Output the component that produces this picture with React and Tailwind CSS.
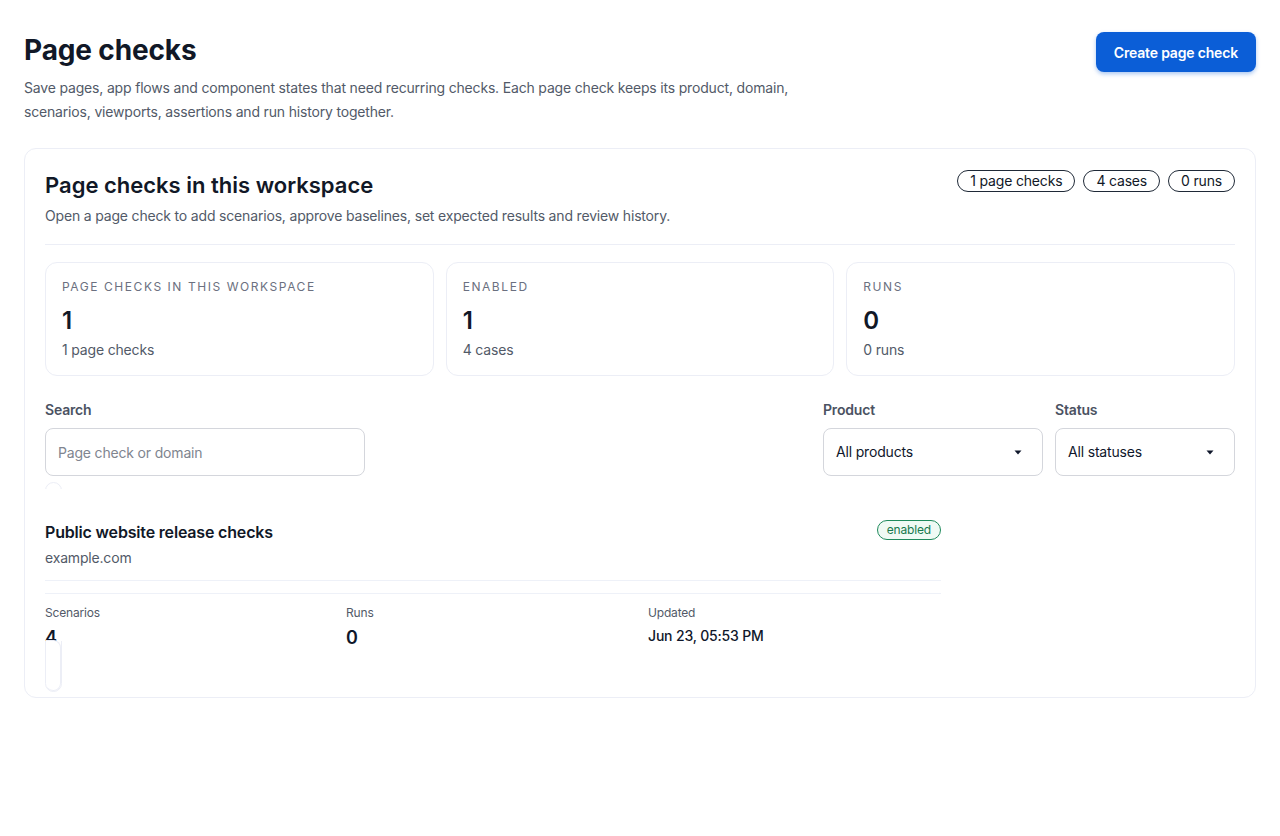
import { useState } from "react";

const stats = [
  { label: "Page checks in this workspace", value: "1", sub: "1 page checks" },
  { label: "Enabled", value: "1", sub: "4 cases" },
  { label: "Runs", value: "0", sub: "0 runs" },
];

const Caret = () => (
  <svg width="8" height="5" viewBox="0 0 8 5" className="text-slate-900">
    <path d="M0.5 0.5h7L4 4.5z" fill="currentColor" />
  </svg>
);

const SelectBox = ({ label, value, width }) => (
  <div className={width}>
    <div className="text-sm leading-5 font-semibold text-[#4b5262]">{label}</div>
    <button
      type="button"
      className="mt-2 flex h-12 w-full items-center justify-between rounded-lg border border-[#d4d6dc] bg-white pl-3 pr-5 text-sm text-slate-900"
    >
      <span>{value}</span>
      <Caret />
    </button>
  </div>
);

export default function App() {
  const [query, setQuery] = useState("");

  return (
    <div
      className="min-h-screen bg-white px-6 pt-8 tracking-[-0.011em] text-slate-900"
      style={{ fontFamily: "Inter, 'Liberation Sans', sans-serif" }}
    >
      {/* Encabezado */}
      <div className="flex items-start justify-between">
        <div>
          <h1 className="text-[28px] leading-9 font-bold tracking-[-0.005em] text-[#111827]">
            Page checks
          </h1>
          <p className="mt-2 max-w-[800px] text-sm leading-6 text-[#525a68]">
            Save pages, app flows and component states that need recurring checks. Each page check
            keeps its product, domain, scenarios, viewports, assertions and run history together.
          </p>
        </div>
        <button
          type="button"
          className="h-10 rounded-lg bg-[#0b5ed7] px-[18px] pt-px text-sm font-semibold text-white shadow-[0_2px_4px_rgba(11,94,215,0.35)]"
        >
          Create page check
        </button>
      </div>

      {/* Tarjeta principal */}
      <div className="mt-6 rounded-xl border border-[#eceef6] px-5 pt-5 pb-[5px]">
        <div className="flex items-start justify-between">
          <div>
            <h2 className="text-[22px] leading-8 font-semibold tracking-normal text-[#111827]">
              Page checks in this workspace
            </h2>
            <p className="mt-[5px] text-sm leading-5 text-[#525a68]">
              Open a page check to add scenarios, approve baselines, set expected results and review
              history.
            </p>
          </div>
          <div className="mt-px flex gap-2">
            {["1 page checks", "4 cases", "0 runs"].map((p) => (
              <span
                key={p}
                className="flex h-[22px] items-center rounded-full border border-[#1f2937] px-3 text-sm text-[#111827]"
              >
                {p}
              </span>
            ))}
          </div>
        </div>

        <div className="mt-[18px] h-px bg-[#eceef6]" />

        {/* Estadísticas */}
        <div className="mt-[17px] grid grid-cols-3 gap-3">
          {stats.map((s) => (
            <div key={s.label} className="rounded-xl border border-[#eceef6] px-4 pt-4 pb-[15px]">
              <div className="text-xs leading-4 uppercase tracking-[0.13em] text-[#6b7080]">
                {s.label}
              </div>
              <div className="mt-[10px] text-2xl leading-8 font-semibold text-[#111827]">
                {s.value}
              </div>
              <div className="mt-[3px] text-sm leading-5 text-[#525a68]">{s.sub}</div>
            </div>
          ))}
        </div>

        {/* Filtros */}
        <div className="mt-6 flex items-start">
          <div className="w-[320px]">
            <div className="text-sm leading-5 font-semibold text-[#4b5262]">Search</div>
            <input
              value={query}
              onChange={(e) => setQuery(e.target.value)}
              placeholder="Page check or domain"
              className="mt-2 h-12 w-full rounded-lg border border-[#d4d6dc] px-3 text-sm text-slate-900 placeholder:text-[#80858f] outline-none"
            />
          </div>
          <div className="ml-auto flex gap-3">
            <SelectBox label="Product" value="All products" width="w-[220px]" />
            <SelectBox label="Status" value="All statuses" width="w-[180px]" />
          </div>
        </div>

        {/* Lista de page checks */}
        <div className="mt-[6px] h-[210px] w-[17px] rounded-xl border border-[#eceef6]">
          <div className="-ml-px mt-[6px] h-[152px] w-[896px] bg-white pt-[31px]">
            <div className="flex items-start justify-between">
              <div>
                <div className="text-base leading-6 font-semibold text-[#111827]">
                  Public website release checks
                </div>
                <div className="mt-1 text-sm leading-5 text-[#525a68]">example.com</div>
              </div>
              <span className="flex h-5 items-center rounded-full border border-[#1f8a5c] bg-[#effaf4] px-[9px] text-xs text-[#17794d]">
                enabled
              </span>
            </div>
            <div className="mt-3 h-px bg-[#eef1f8]" />
            <div className="mt-3 h-px bg-[#eef1f8]" />
            <div className="mt-[11px] grid grid-cols-[301px_302px_1fr]">
              <div>
                <div className="text-xs leading-4 text-[#525a68]">Scenarios</div>
                <div className="mt-[3px] text-lg leading-7 font-semibold">4</div>
              </div>
              <div>
                <div className="text-xs leading-4 text-[#525a68]">Runs</div>
                <div className="mt-[3px] text-lg leading-7 font-semibold">0</div>
              </div>
              <div>
                <div className="text-xs leading-4 text-[#525a68]">Updated</div>
                <div className="mt-[5px] text-sm leading-5 font-medium">Jun 23, 05:53 PM</div>
              </div>
            </div>
          </div>
          <div className="relative -mt-px h-[51px] rounded-b-xl rounded-tr-xl border-r border-b border-t border-[#eceef6] bg-white" />
        </div>
      </div>
    </div>
  );
}
